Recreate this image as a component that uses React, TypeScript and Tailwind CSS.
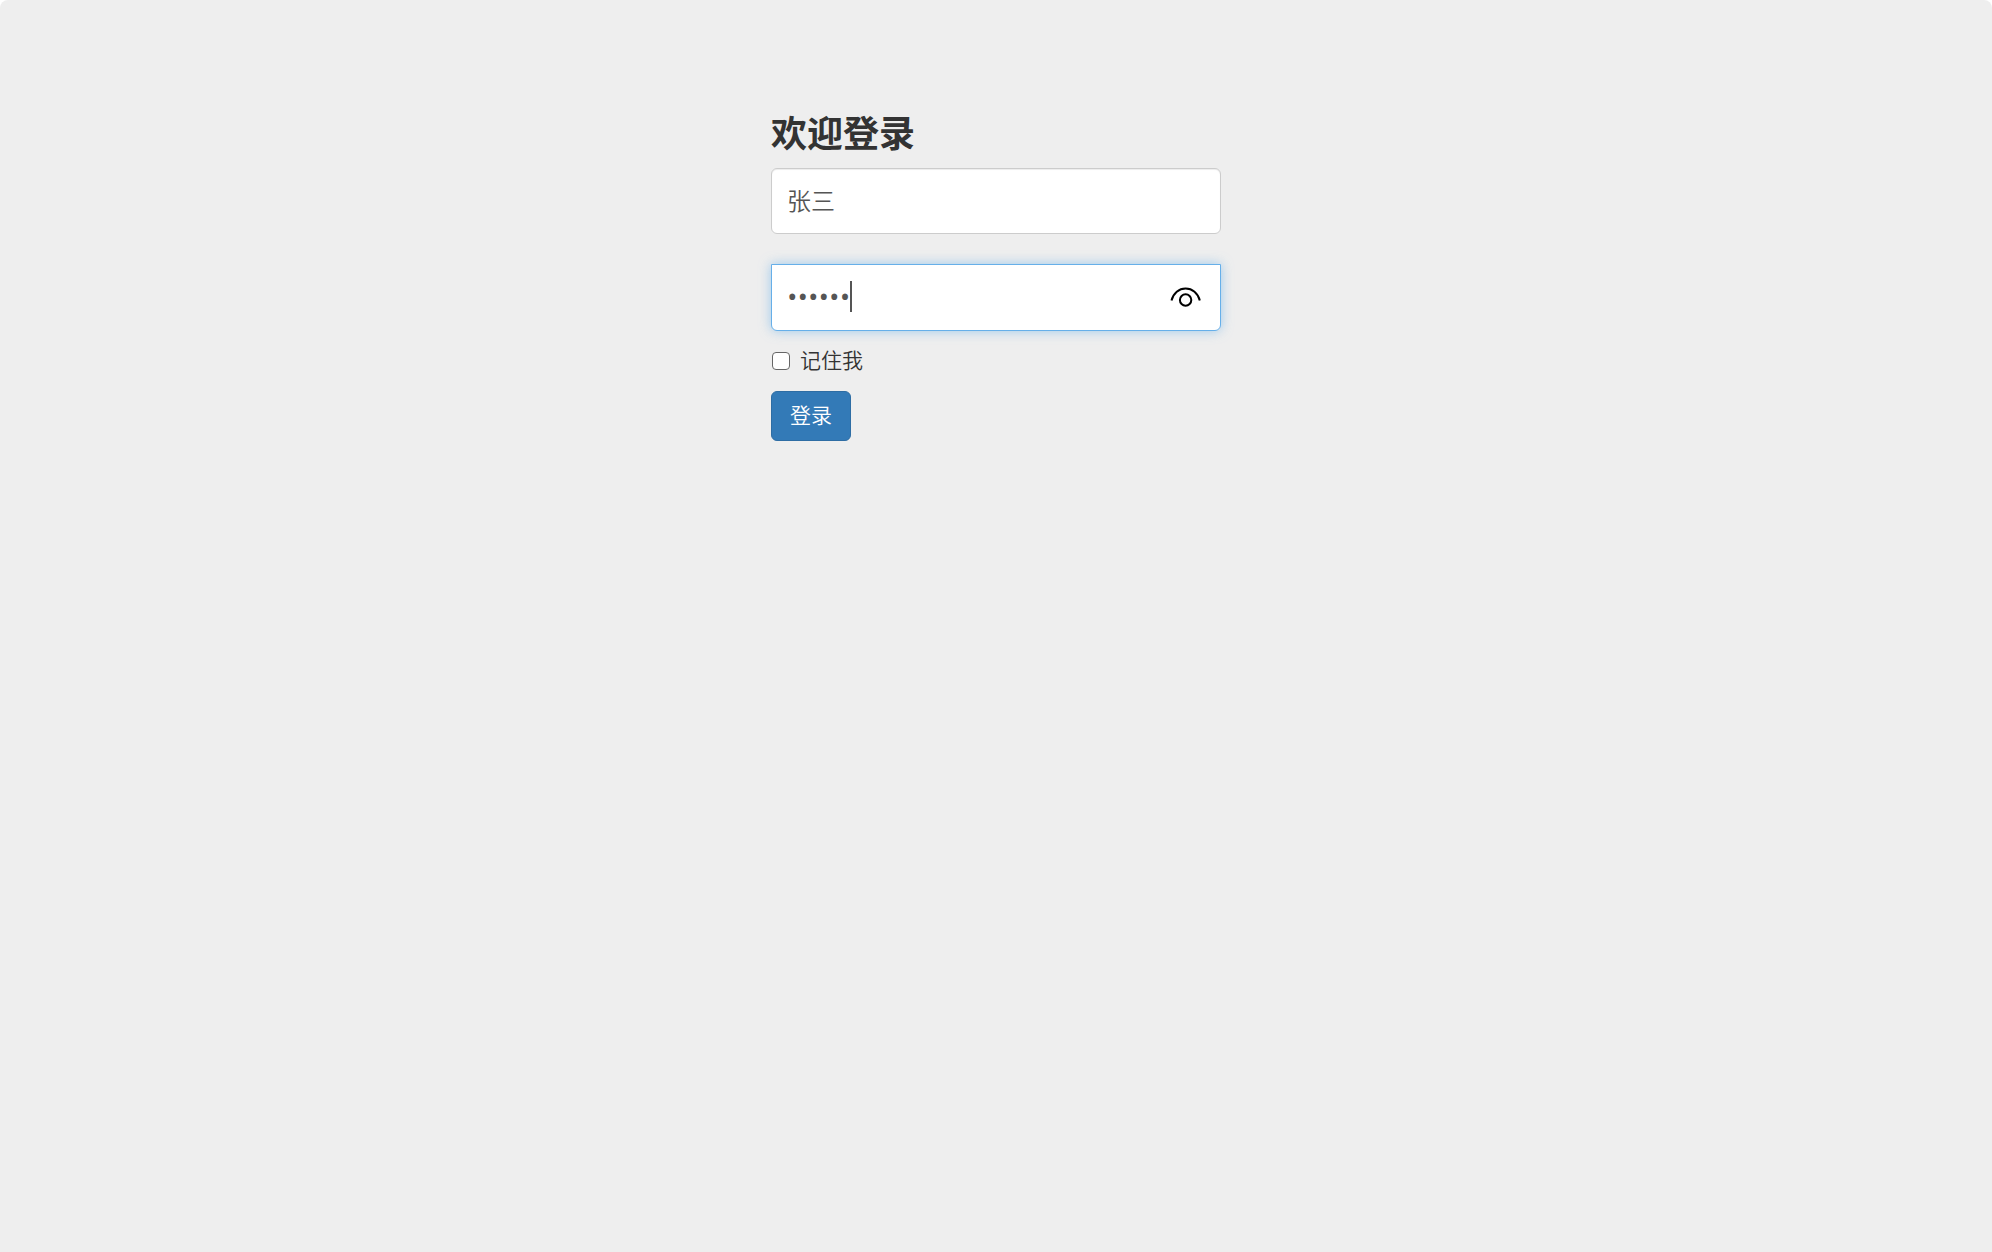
import { useState } from "react"

const inputStyle =
  "block w-full border bg-white px-[15px] pb-[3px] text-[#555] outline-none"

function EyeIcon() {
  return (
    <svg viewBox="0 0 32 22" className="h-[22px] w-8" fill="none" stroke="#000" strokeWidth="2">
      <path d="M1.500 14.500C3.300 7 9 2.500 15.600 2.500S28 7 29.800 14.500" />
      <circle cx="15.600" cy="14" r="5.700" />
    </svg>
  )
}

export default function App() {
  const [name, setName] = useState("张三")
  const [password, setPassword] = useState("123456")
  const [visible, setVisible] = useState(false)

  return (
    <div className="min-h-screen bg-white font-['Liberation_Sans','Noto_Sans_CJK_SC',sans-serif]">
      <main className="min-h-screen rounded-t-lg bg-[#eee] px-4 pt-28">
        <form
          className="mx-auto max-w-[450px] font-[350] text-[#333]"
          onSubmit={(e) => e.preventDefault()}
        >
          <h2 className="mb-[10px] text-4xl leading-[46px] font-bold">欢迎登录</h2>

          <input
            type="text"
            aria-label="用户名"
            value={name}
            onChange={(e) => setName(e.target.value)}
            className={`${inputStyle} h-[66px] rounded-md border-[#ccc] text-2xl shadow-[inset_0_1px_1px_rgba(0,0,0,0.075)]`}
          />

          <div className="relative mt-[30px]">
            <input
              type={visible ? "text" : "password"}
              aria-label="密码"
              value={password}
              onChange={(e) => setPassword(e.target.value)}
              className={`${inputStyle} h-[67px] rounded-b-md border-[#66afe9] pr-16 font-['Open_Sans','Noto_Sans_CJK_SC',sans-serif] text-[28px] font-medium caret-transparent shadow-[0_0_12px_rgba(102,175,233,0.6)]`}
            />
            {/* Text cursor */}
            <span className="absolute top-[17px] left-[79px] h-[31px] w-[2px] bg-[#555]" />
            <button
              type="button"
              aria-label="显示密码"
              onClick={() => setVisible(!visible)}
              className="absolute top-[22px] right-[19px]"
            >
              <EyeIcon />
            </button>
          </div>

          <label className="mt-[15px] flex h-[30px] items-center gap-[10px] text-[21px]">
            <input
              type="checkbox"
              className="ml-px size-[18px] appearance-none rounded-[4px] border border-[#666] bg-white checked:bg-[#337ab7]"
            />
            记住我
          </label>

          <button
            type="submit"
            className="mt-[15px] h-[50px] rounded-md border border-[#2e6da4] bg-[#337ab7] px-[18px] text-[21px] text-white"
          >
            登录
          </button>
        </form>
      </main>
    </div>
  )
}
